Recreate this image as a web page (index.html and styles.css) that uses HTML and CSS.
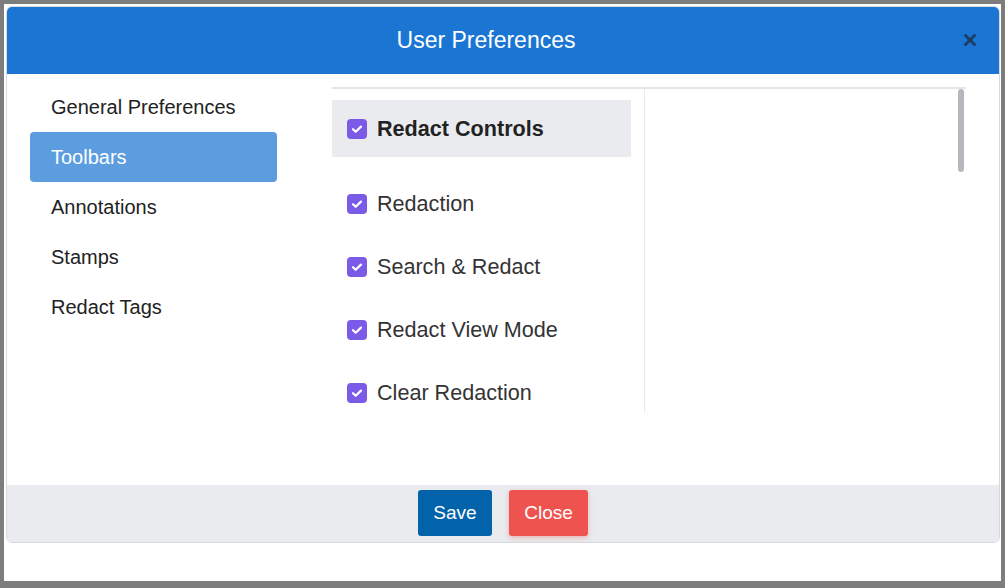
FILE: index.html
```html
<!DOCTYPE html>
<html>
<head>
<meta charset="utf-8">
<link rel="stylesheet" href="styles.css">
</head>
<body>
<div class="screen">
  <div class="modal">
    <div class="modal-header">
      <h1 class="modal-title">User Preferences</h1>
      <span class="modal-close"><svg viewBox="0 0 14 14" width="14" height="14"><path d="M2.5 2.5l9 9M11.5 2.5l-9 9" stroke="#1c3d66" stroke-width="3" stroke-linecap="round"/></svg></span>
    </div>
    <div class="modal-body">
      <ul class="nav">
        <li class="nav-item">General Preferences</li>
        <li class="nav-item active">Toolbars</li>
        <li class="nav-item">Annotations</li>
        <li class="nav-item">Stamps</li>
        <li class="nav-item">Redact Tags</li>
      </ul>
      <div class="panel">
        <div class="col">
          <div class="group-head">
            <span class="cb"><svg viewBox="0 0 20 20" width="20" height="20"><path d="M6 10.2l2.7 2.6L14 7.6" fill="none" stroke="#fff" stroke-width="2.2" stroke-linecap="round" stroke-linejoin="round"/></svg></span>
            <span class="group-label">Redact Controls</span>
          </div>
          <div class="item"><span class="cb"><svg viewBox="0 0 20 20" width="20" height="20"><path d="M6 10.2l2.7 2.6L14 7.6" fill="none" stroke="#fff" stroke-width="2.2" stroke-linecap="round" stroke-linejoin="round"/></svg></span><span>Redaction</span></div>
          <div class="item"><span class="cb"><svg viewBox="0 0 20 20" width="20" height="20"><path d="M6 10.2l2.7 2.6L14 7.6" fill="none" stroke="#fff" stroke-width="2.2" stroke-linecap="round" stroke-linejoin="round"/></svg></span><span>Search &amp; Redact</span></div>
          <div class="item"><span class="cb"><svg viewBox="0 0 20 20" width="20" height="20"><path d="M6 10.2l2.7 2.6L14 7.6" fill="none" stroke="#fff" stroke-width="2.2" stroke-linecap="round" stroke-linejoin="round"/></svg></span><span>Redact View Mode</span></div>
          <div class="item"><span class="cb"><svg viewBox="0 0 20 20" width="20" height="20"><path d="M6 10.2l2.7 2.6L14 7.6" fill="none" stroke="#fff" stroke-width="2.2" stroke-linecap="round" stroke-linejoin="round"/></svg></span><span>Clear Redaction</span></div>
        </div>
        <div class="col2"></div>
        <div class="scrollbar"></div>
      </div>
    </div>
    <div class="modal-footer">
      <button class="btn btn-save">Save</button>
      <button class="btn btn-close">Close</button>
    </div>
  </div>
</div>
</body>
</html>
```
FILE: styles.css
```css
* { box-sizing: border-box; }
html, body { margin: 0; padding: 0; }
body {
  width: 1005px;
  height: 588px;
  background: #7d7d7d;
  font-family: "Liberation Sans", Arial, sans-serif;
  overflow: hidden;
}
.screen {
  margin: 4px 0 0 4px;
  width: 997px;
  height: 577px;
  background: #fff;
  padding: 2px 0 0 2px;
}
.modal {
  width: 994px;
  height: 537px;
  border: 1px solid #d6d9dd;
  border-radius: 6px;
  overflow: hidden;
  display: flex;
  flex-direction: column;
  background: #fff;
}
.modal-header {
  height: 67px;
  flex: none;
  background: #1a76d2;
  display: flex;
  align-items: center;
  justify-content: center;
  position: relative;
}
.modal-title {
  margin: 0 0 0 -34px;
  color: #fff;
  font-weight: normal;
  font-size: 23px;
}
.modal-close {
  position: absolute;
  right: 22px;
  top: 26px;
  width: 14px;
  height: 14px;
  display: flex;
}
.modal-body {
  height: 411px;
  flex: none;
  display: flex;
  padding: 8px 0 0 23px;
}
.nav {
  list-style: none;
  margin: 0;
  padding: 0;
  width: 247px;
  flex: none;
}
.nav-item {
  height: 50px;
  line-height: 50px;
  padding-left: 21px;
  font-size: 20px;
  color: #222;
  border-radius: 4px;
}
.nav-item.active {
  background: #5b9ddf;
  color: #fff;
}
.panel {
  margin-left: 55px;
  margin-top: 5px;
  width: 634px;
  height: 326px;
  border-top: 2px solid #e4e5e7;
  display: flex;
  position: relative;
  overflow: hidden;
}
.col {
  width: 313px;
  flex: none;
  border-right: 1px solid #e9eaec;
  padding-top: 11px;
}
.group-head {
  width: 299px;
  height: 57px;
  background: #e9ebef;
  display: flex;
  align-items: center;
  padding-left: 15px;
  gap: 10px;
  margin-bottom: 15px;
}
.group-label {
  font-weight: bold;
  font-size: 21.6px;
  color: #222;
}
.cb {
  width: 20px;
  height: 20px;
  border-radius: 4px;
  background: #7a5ae6;
  flex: none;
  display: flex;
}
.item {
  height: 63px;
  display: flex;
  align-items: center;
  padding-left: 15px;
  gap: 10px;
  font-size: 21.6px;
  color: #333;
}
.col2 { flex: 1; }
.scrollbar {
  position: absolute;
  right: 2px;
  top: 0;
  width: 6px;
  height: 83px;
  border-radius: 3px;
  background: #b5b8bd;
}
.modal-footer {
  margin-top: auto;
  height: 58px;
  flex: none;
  background: #e9ebef;
  border-bottom: 1px solid #cfd2d6;
  display: flex;
  justify-content: center;
  align-items: flex-start;
  padding-top: 5px;
  gap: 17px;
}
.btn {
  height: 46px;
  border: none;
  border-radius: 3px;
  color: #fff;
  font-family: "Liberation Sans", Arial, sans-serif;
  font-size: 19px;
  padding: 0;
}
.btn-save { width: 74px; background: #0263ab; }
.btn-close { width: 79px; background: #ef5350; box-shadow: 0 2px 5px rgba(239, 83, 80, 0.35); }
```
